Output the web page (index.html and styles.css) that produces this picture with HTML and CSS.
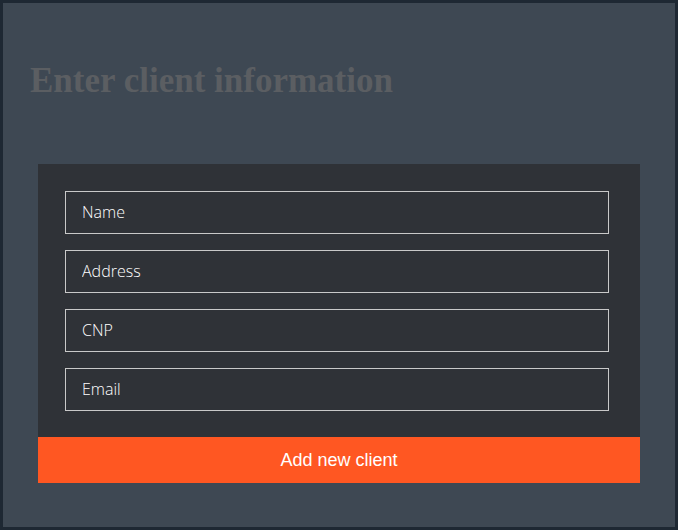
FILE: index.html
```html
<!DOCTYPE html>
<html>
<head>
<meta charset="utf-8">
<link rel="stylesheet" href="styles.css">
</head>
<body>
<div class="frame">
  <h1 class="title">Enter client information</h1>
  <form class="card">
    <div class="fields">
      <input class="field" type="text" placeholder="Name">
      <input class="field" type="text" placeholder="Address">
      <input class="field" type="text" placeholder="CNP">
      <input class="field" type="text" placeholder="Email">
    </div>
    <button class="submit" type="button">Add new client</button>
  </form>
</div>
</body>
</html>
```
FILE: styles.css
```css
html, body {
  margin: 0;
  padding: 0;
}
body {
  width: 678px;
  height: 530px;
  background: #1e2833;
}
.frame {
  box-sizing: border-box;
  width: 678px;
  height: 530px;
  border: 3px solid #1e2833;
  background: #3e4853;
  padding: 0 35px 0 35px;
}
.title {
  margin: 0;
  padding: 58px 0 0 0;
  margin-left: -8px;
  font-family: "Liberation Serif", serif;
  font-weight: bold;
  font-size: 35px;
  line-height: 40px;
  color: #5b5e62;
}
.card {
  margin-top: 63px;
  width: 602px;
  background: #2f3237;
  display: flex;
  flex-direction: column;
}
.fields {
  display: flex;
  flex-direction: column;
  gap: 16px;
  padding: 27px 31px 26px 27px;
}
.field {
  box-sizing: border-box;
  width: 544px;
  height: 43px;
  margin: 0;
  padding: 0 16px 2px 16px;
  border: 1px solid #c9c9c9;
  background: transparent;
  font-family: "Open Sans", sans-serif;
  font-weight: 300;
  font-size: 16px;
  color: #ffffff;
  outline: none;
}
.field::placeholder {
  color: #ffffff;
  opacity: 1;
}
.submit {
  height: 46px;
  margin: 0;
  border: none;
  background: #ff5722;
  color: #ffffff;
  font-family: "Liberation Sans", Arial, sans-serif;
  font-size: 18px;
  padding: 0;
  cursor: pointer;
}
```
